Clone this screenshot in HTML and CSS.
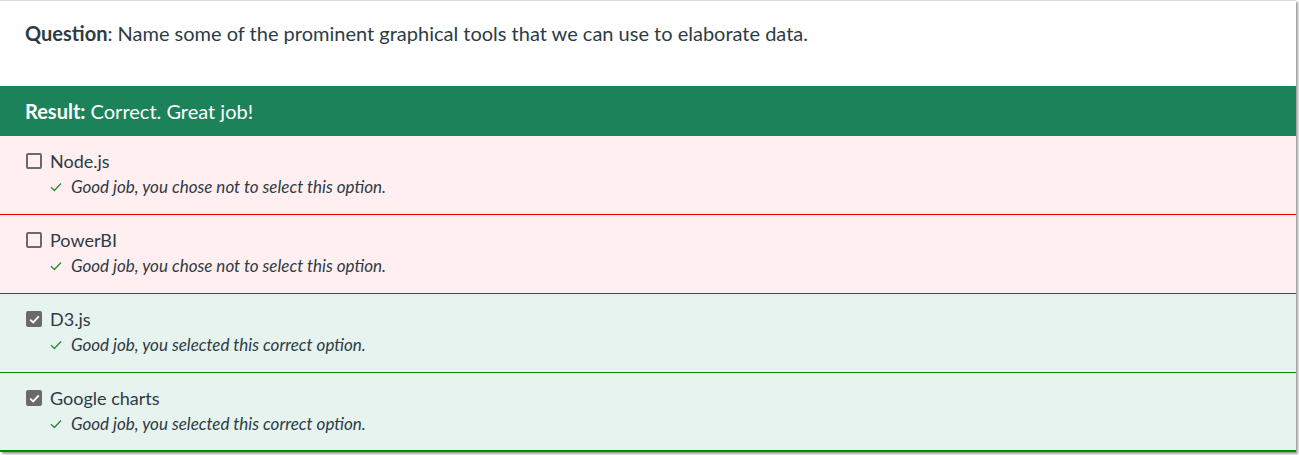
FILE: index.html
```html
<!DOCTYPE html>
<html lang="en">
<head>
<meta charset="utf-8">
<title>Quiz result</title>
<link rel="stylesheet" href="styles.css">
</head>
<body>
<div class="card">
  <div class="question"><strong>Question</strong>: Name some of the prominent graphical tools that we can use to elaborate data.</div>
  <div class="result"><strong>Result:</strong> Correct. Great job!</div>
  <div class="option wrong">
    <div class="label"><span class="box"></span>Node.js</div>
    <div class="feedback"><svg class="tick" width="12" height="10" viewBox="0 0 12 10"><path d="M1 5.2 L4.4 8.4 L11 1.4" fill="none" stroke="#2e8b3a" stroke-width="1.4"/></svg><em>Good job, you chose not to select this option.</em></div>
  </div>
  <div class="option wrong">
    <div class="label"><span class="box"></span>PowerBI</div>
    <div class="feedback"><svg class="tick" width="12" height="10" viewBox="0 0 12 10"><path d="M1 5.2 L4.4 8.4 L11 1.4" fill="none" stroke="#2e8b3a" stroke-width="1.4"/></svg><em>Good job, you chose not to select this option.</em></div>
  </div>
  <div class="option right">
    <div class="label"><span class="box checked"><svg width="11" height="9" viewBox="0 0 11 9"><path d="M1.2 4.6 L4.2 7.4 L9.8 1.4" fill="none" stroke="#fff" stroke-width="1.8"/></svg></span>D3.js</div>
    <div class="feedback"><svg class="tick" width="12" height="10" viewBox="0 0 12 10"><path d="M1 5.2 L4.4 8.4 L11 1.4" fill="none" stroke="#2e8b3a" stroke-width="1.4"/></svg><em>Good job, you selected this correct option.</em></div>
  </div>
  <div class="option right last">
    <div class="label"><span class="box checked"><svg width="11" height="9" viewBox="0 0 11 9"><path d="M1.2 4.6 L4.2 7.4 L9.8 1.4" fill="none" stroke="#fff" stroke-width="1.8"/></svg></span>Google charts</div>
    <div class="feedback"><svg class="tick" width="12" height="10" viewBox="0 0 12 10"><path d="M1 5.2 L4.4 8.4 L11 1.4" fill="none" stroke="#2e8b3a" stroke-width="1.4"/></svg><em>Good job, you selected this correct option.</em></div>
  </div>
</div>
</body>
</html>
```
FILE: styles.css
```css
html, body {
  margin: 0;
  padding: 0;
  background: #fff;
}
body {
  font-family: Lato, "Noto Sans", sans-serif;
  color: #2d3b45;
  height: 455px;
  overflow: hidden;
}
.card {
  width: 1296px;
  border-top: 1px solid #dcdcdc;
  background: #fff;
  box-shadow: 2px 2px 2px 0 rgba(0, 0, 0, 0.38);
}
.question {
  font-size: 20px;
  line-height: 30px;
  padding: 17px 25px 38px;
}
.question strong {
  font-weight: 700;
}
.result {
  background: #1c825a;
  color: #fff;
  font-size: 20px;
  line-height: 50px;
  height: 50px;
  padding-left: 25px;
}
.option {
  padding: 12px 0 15px 26px;
  border-bottom: 1px solid;
}
.option.wrong {
  background: #ffeff1;
  border-color: #f00000;
}
.option.right {
  background: #e6f3ef;
  border-color: #008a00;
}
.option.last {
  border-bottom-width: 2px;
  padding-bottom: 14px;
}
.label {
  display: flex;
  align-items: center;
  font-size: 18px;
  line-height: 26px;
}
.box {
  width: 16px;
  height: 16px;
  box-sizing: border-box;
  border: 2px solid #6a6a6a;
  border-radius: 2px;
  margin-right: 8px;
  display: flex;
  align-items: center;
  justify-content: center;
  background: transparent;
}
.box.checked {
  background: #6a6a6a;
}
.feedback {
  display: flex;
  align-items: center;
  margin-top: 1px;
  padding-left: 24px;
  font-size: 17px;
  line-height: 24px;
}
.tick {
  margin-right: 9px;
}
```
